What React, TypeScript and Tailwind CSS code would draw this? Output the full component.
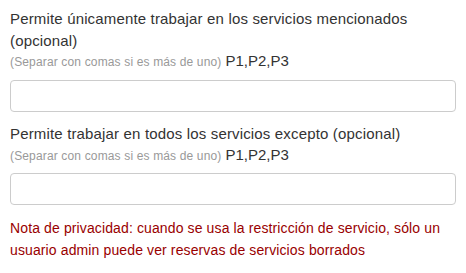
export default function App() {
  return (
    <div className="w-[466px] h-[273px] bg-white px-[10px] pt-[8px]" style={{ fontFamily: '"Liberation Sans", Arial, sans-serif' }}>
      <div className="text-[15px] leading-[22px] tracking-[0.16px] text-[#333]">
        Permite únicamente trabajar en los servicios mencionados (opcional)
      </div>
      <div className="text-[14px] leading-[18px] h-[18px] whitespace-nowrap">
        <span className="text-[12px] leading-[18px] tracking-[0.15px] text-[#999]">(Separar con comas si es más de uno)</span>{' '}
        <span className="text-[15px] leading-[18px] text-[#333]">P1,P2,P3</span>
      </div>
      <input className="mt-[10px] block w-full h-[32px] border border-[#ccc] rounded-[4px] bg-white" />
      <div className="mt-[11px] text-[15px] leading-[22px] tracking-[0.16px] text-[#333]">
        Permite trabajar en todos los servicios excepto (opcional)
      </div>
      <div className="mt-[1px] text-[14px] leading-[18px] h-[18px] whitespace-nowrap">
        <span className="text-[12px] leading-[18px] tracking-[0.15px] text-[#999]">(Separar con comas si es más de uno)</span>{' '}
        <span className="text-[15px] leading-[18px] text-[#333]">P1,P2,P3</span>
      </div>
      <input className="mt-[9px] block w-full h-[32px] border border-[#ccc] rounded-[4px] bg-white" />
      <div className="mt-[12px] text-[14px] leading-[22px] tracking-[0.12px] text-[#990000]">
        Nota de privacidad: cuando se usa la restricción de servicio, sólo un usuario admin puede ver reservas de servicios borrados
      </div>
    </div>
  );
}
